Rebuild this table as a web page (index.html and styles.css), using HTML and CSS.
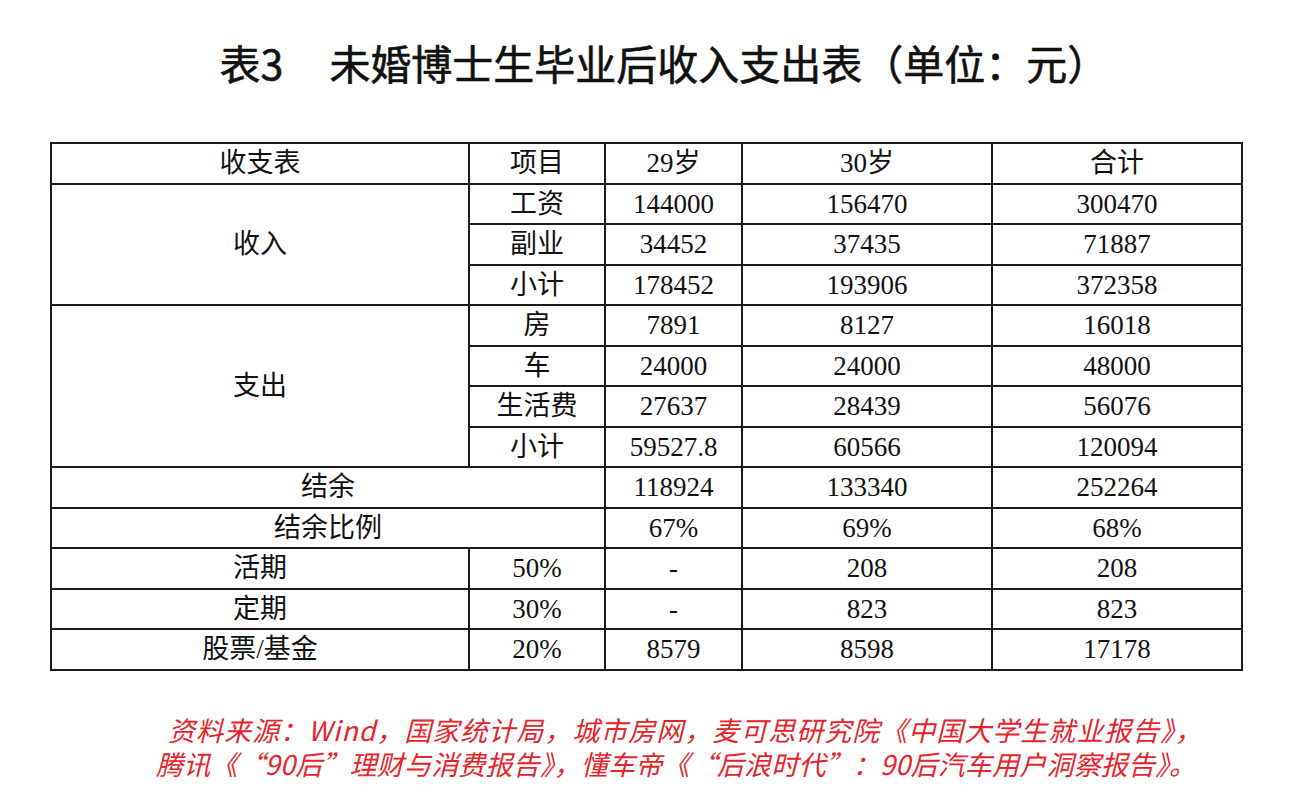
FILE: index.html
```html
<!DOCTYPE html>
<html lang="zh-CN">
<head>
<meta charset="utf-8">
<title>表3 未婚博士生毕业后收入支出表</title>
<link rel="stylesheet" href="styles.css">
</head>
<body>
<div class="page">
  <h1 class="title"><span class="title-no">表3</span><span class="title-text">未婚博士生毕业后收入支出表（单位：元）</span></h1>
  <table class="sheet">
    <colgroup>
      <col class="c1"><col class="c2"><col class="c3"><col class="c4"><col class="c5">
    </colgroup>
    <tbody>
      <tr><td>收支表</td><td>项目</td><td>29岁</td><td>30岁</td><td>合计</td></tr>
      <tr><td rowspan="3">收入</td><td>工资</td><td>144000</td><td>156470</td><td>300470</td></tr>
      <tr><td>副业</td><td>34452</td><td>37435</td><td>71887</td></tr>
      <tr><td>小计</td><td>178452</td><td>193906</td><td>372358</td></tr>
      <tr><td rowspan="4">支出</td><td>房</td><td>7891</td><td>8127</td><td>16018</td></tr>
      <tr><td>车</td><td>24000</td><td>24000</td><td>48000</td></tr>
      <tr><td>生活费</td><td>27637</td><td>28439</td><td>56076</td></tr>
      <tr><td>小计</td><td>59527.8</td><td>60566</td><td>120094</td></tr>
      <tr><td colspan="2">结余</td><td>118924</td><td>133340</td><td>252264</td></tr>
      <tr><td colspan="2">结余比例</td><td>67%</td><td>69%</td><td>68%</td></tr>
      <tr><td>活期</td><td>50%</td><td>-</td><td>208</td><td>208</td></tr>
      <tr><td>定期</td><td>30%</td><td>-</td><td>823</td><td>823</td></tr>
      <tr><td>股票/基金</td><td>20%</td><td>8579</td><td>8598</td><td>17178</td></tr>
    </tbody>
  </table>
  <div class="source">
    <p class="line line1">资料来源：Wind，国家统计局，城市房网，麦可思研究院《中国大学生就业报告》，</p>
    <p class="line line2">腾讯《“90后”理财与消费报告》，懂车帝《“后浪时代”：90后汽车用户洞察报告》。</p>
  </div>
</div>
</body>
</html>
```
FILE: styles.css
```css
html, body {
  margin: 0;
  padding: 0;
  background: #ffffff;
}

.page {
  width: 1294px;
  height: 812px;
  overflow: hidden;
  padding-top: 37px;
  box-sizing: border-box;
}

.title {
  margin: 0;
  display: flex;
  justify-content: center;
  padding-left: 34px;
  font-family: "Noto Sans CJK SC", "Noto Sans", sans-serif;
  font-size: 41px;
  font-weight: 400;
  line-height: 50px;
  color: #111111;
  -webkit-text-stroke: 0.6px #111111;
}

.title-no {
  margin-right: 46px;
}

.sheet {
  margin: 55px 0 0 50px;
  border-collapse: collapse;
  table-layout: fixed;
  width: 1191px;
  font-family: "Liberation Serif", "Noto Sans CJK SC", serif;
  font-size: 27px;
  color: #111111;
}

.c1 { width: 418px; }
.c2 { width: 136px; }
.c3 { width: 137px; }
.c4 { width: 250px; }
.c5 { width: 250px; }

.sheet td {
  border: 2px solid #1c1c1c;
  height: 40.5px;
  padding: 0;
  text-align: center;
  vertical-align: middle;
  line-height: 30px;
  box-sizing: border-box;
}

.source {
  margin-top: 42px;
  font-family: "Noto Sans CJK SC", "Noto Sans", sans-serif;
  font-style: italic;
  font-size: 27px;
  line-height: 34px;
  color: #e5252a;
}

.line {
  margin: 0;
  white-space: nowrap;
  height: 34px;
}

.line1 {
  padding-left: 168px;
  letter-spacing: 1px;
}

.line2 {
  padding-left: 156px;
  letter-spacing: 0.2px;
}
```
